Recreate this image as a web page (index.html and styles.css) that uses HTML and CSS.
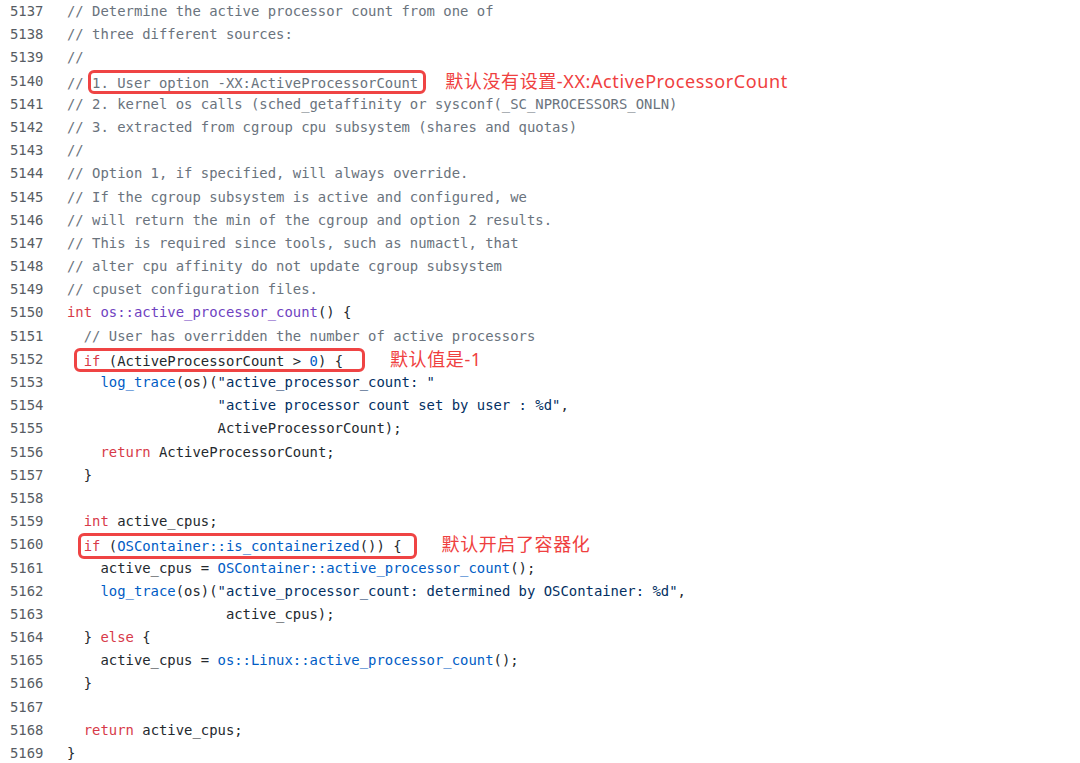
FILE: index.html
```html
<!DOCTYPE html>
<html>
<head>
<meta charset="utf-8">
<link rel="stylesheet" href="styles.css">
</head>
<body>
<div class="code">
  <div class="ln"><span class="num">5137</span><span class="src"><span class="c">// Determine the active processor count from one of</span></span></div>
  <div class="ln"><span class="num">5138</span><span class="src"><span class="c">// three different sources:</span></span></div>
  <div class="ln"><span class="num">5139</span><span class="src"><span class="c">//</span></span></div>
  <div class="ln"><span class="num">5140</span><span class="src"><span class="c">// 1. User option -XX:ActiveProcessorCount</span><span class="note note-1">默认没有设置-XX:ActiveProcessorCount</span></span></div>
  <div class="ln"><span class="num">5141</span><span class="src"><span class="c">// 2. kernel os calls (sched_getaffinity or sysconf(_SC_NPROCESSORS_ONLN)</span></span></div>
  <div class="ln"><span class="num">5142</span><span class="src"><span class="c">// 3. extracted from cgroup cpu subsystem (shares and quotas)</span></span></div>
  <div class="ln"><span class="num">5143</span><span class="src"><span class="c">//</span></span></div>
  <div class="ln"><span class="num">5144</span><span class="src"><span class="c">// Option 1, if specified, will always override.</span></span></div>
  <div class="ln"><span class="num">5145</span><span class="src"><span class="c">// If the cgroup subsystem is active and configured, we</span></span></div>
  <div class="ln"><span class="num">5146</span><span class="src"><span class="c">// will return the min of the cgroup and option 2 results.</span></span></div>
  <div class="ln"><span class="num">5147</span><span class="src"><span class="c">// This is required since tools, such as numactl, that</span></span></div>
  <div class="ln"><span class="num">5148</span><span class="src"><span class="c">// alter cpu affinity do not update cgroup subsystem</span></span></div>
  <div class="ln"><span class="num">5149</span><span class="src"><span class="c">// cpuset configuration files.</span></span></div>
  <div class="ln"><span class="num">5150</span><span class="src"><span class="k">int</span> <span class="e">os::active_processor_count</span>() {</span></div>
  <div class="ln"><span class="num">5151</span><span class="src">  <span class="c">// User has overridden the number of active processors</span></span></div>
  <div class="ln"><span class="num">5152</span><span class="src">  <span class="k">if</span> (ActiveProcessorCount &gt; <span class="n">0</span>) {<span class="note note-2">默认值是-1</span></span></div>
  <div class="ln"><span class="num">5153</span><span class="src">    <span class="n">log_trace</span>(os)(<span class="s">"active_processor_count: "</span></span></div>
  <div class="ln"><span class="num">5154</span><span class="src">                  <span class="s">"active processor count set by user : %d"</span>,</span></div>
  <div class="ln"><span class="num">5155</span><span class="src">                  ActiveProcessorCount);</span></div>
  <div class="ln"><span class="num">5156</span><span class="src">    <span class="k">return</span> ActiveProcessorCount;</span></div>
  <div class="ln"><span class="num">5157</span><span class="src">  }</span></div>
  <div class="ln"><span class="num">5158</span><span class="src"> </span></div>
  <div class="ln"><span class="num">5159</span><span class="src">  <span class="k">int</span> active_cpus;</span></div>
  <div class="ln"><span class="num">5160</span><span class="src">  <span class="k">if</span> (<span class="n">OSContainer::is_containerized</span>()) {<span class="note note-3">默认开启了容器化</span></span></div>
  <div class="ln"><span class="num">5161</span><span class="src">    active_cpus = <span class="n">OSContainer::active_processor_count</span>();</span></div>
  <div class="ln"><span class="num">5162</span><span class="src">    <span class="n">log_trace</span>(os)(<span class="s">"active_processor_count: determined by OSContainer: %d"</span>,</span></div>
  <div class="ln"><span class="num">5163</span><span class="src">                   active_cpus);</span></div>
  <div class="ln"><span class="num">5164</span><span class="src">  } <span class="k">else</span> {</span></div>
  <div class="ln"><span class="num">5165</span><span class="src">    active_cpus = <span class="n">os::Linux::active_processor_count</span>();</span></div>
  <div class="ln"><span class="num">5166</span><span class="src">  }</span></div>
  <div class="ln"><span class="num">5167</span><span class="src"> </span></div>
  <div class="ln"><span class="num">5168</span><span class="src">  <span class="k">return</span> active_cpus;</span></div>
  <div class="ln"><span class="num">5169</span><span class="src">}</span></div>

  <div class="box box-1"></div>
  <div class="box box-2"></div>
  <div class="box box-3"></div>
</div>
</body>
</html>
```
FILE: styles.css
```css
html, body {
  margin: 0;
  padding: 0;
  background: #ffffff;
}

.code {
  position: relative;
  width: 1080px;
  height: 763px;
  overflow: hidden;
  font-family: "DejaVu Sans Mono", "Liberation Mono", monospace;
  font-size: 13.9px;
  color: #24292e;
}

.ln {
  display: flex;
  height: 23.2px;
  line-height: 23.2px;
  white-space: pre;
}

.num {
  width: 33.4px;
  padding-left: 10px;
  margin-right: 23.6px;
  text-align: right;
  color: #575c63;
  flex: none;
}

.src {
  flex: none;
}

.c { color: #6a737d; }
.k { color: #d73a49; }
.e { color: #6f42c1; }
.n { color: #005cc5; }
.s { color: #032f62; }

.note {
  font-family: "Noto Sans", "Noto Sans CJK SC", sans-serif;
  font-size: 18px;
  letter-spacing: 0.6px;
  color: #ef4040;
  white-space: pre;
}

.note-1 { margin-left: 27px; }
.note-2 { margin-left: 47px; }
.note-3 { margin-left: 40px; }

.box {
  position: absolute;
  border: 3px solid #ef4444;
  border-radius: 6px;
  box-sizing: border-box;
}

.box-1 { left: 88px; top: 70px; width: 338px; height: 24px; }
.box-2 { left: 74px; top: 348px; width: 291px; height: 24px; }
.box-3 { left: 78px; top: 533px; width: 339px; height: 26px; }
```
